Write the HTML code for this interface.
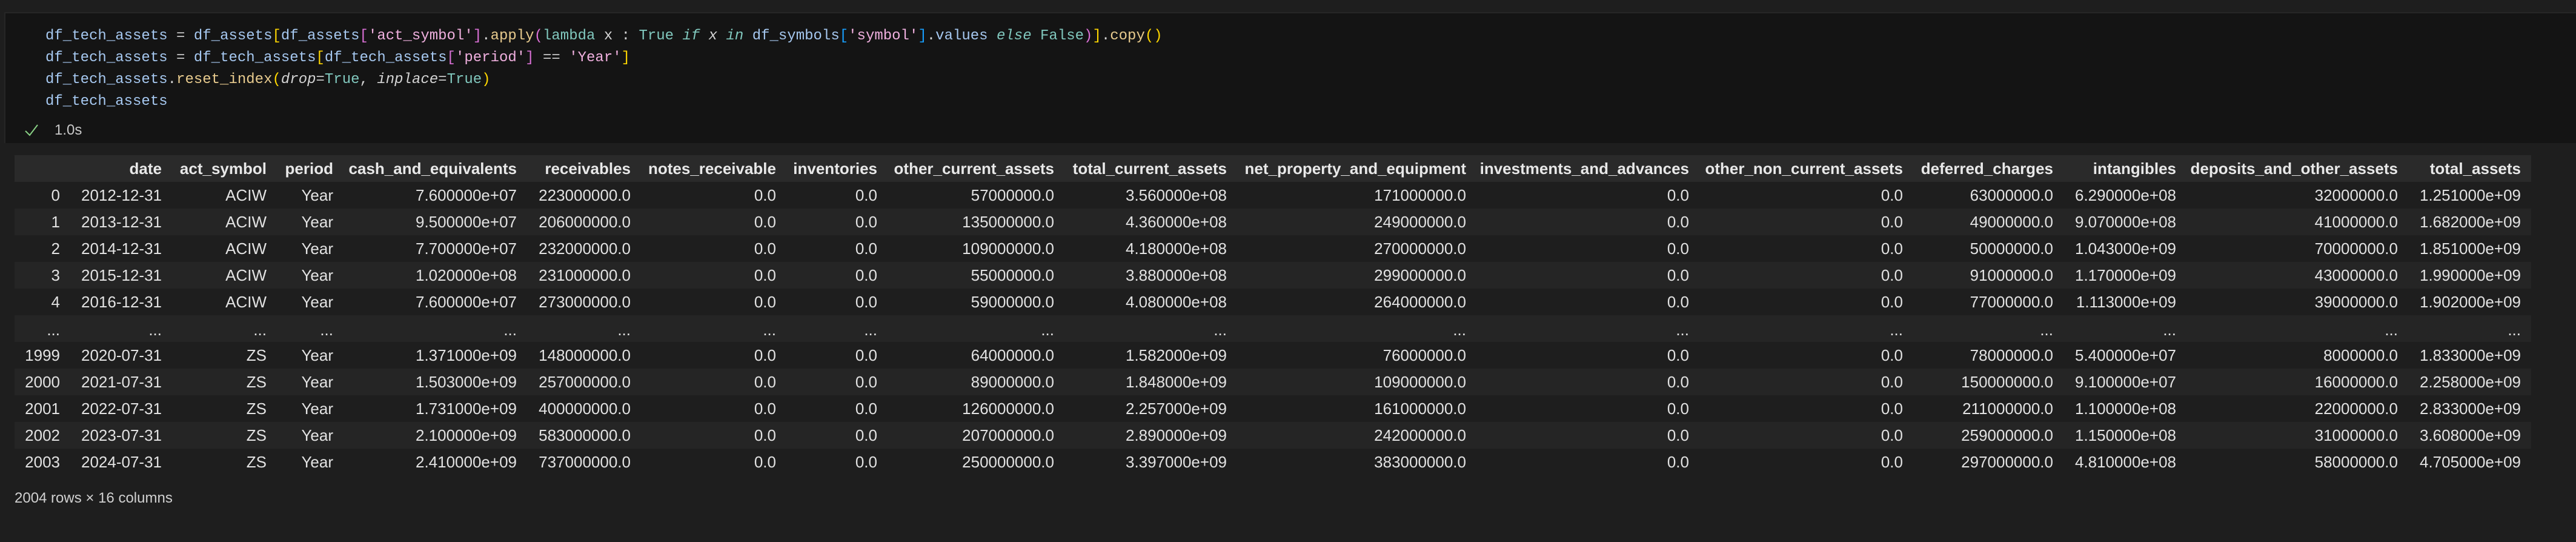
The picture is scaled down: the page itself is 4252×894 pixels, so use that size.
<!DOCTYPE html>
<html><head><meta charset="utf-8"><style>
html,body{margin:0;padding:0;width:4252px;height:894px;background:#1e1e1e;overflow:hidden}
.cell{position:absolute;left:7px;top:20px;width:4245px;height:216px;background:#141414;border-top:2px solid #262626;border-left:2px solid #262626;box-sizing:border-box}
.code{position:absolute;left:75px;top:42px;font-family:"Liberation Mono",monospace;font-size:24px;line-height:36px;color:#a6c8f0;white-space:pre}
.o{color:#c6c6c6}.s{color:#f0b0df}.m{color:#e8cb8e}.k{color:#81c8be}.i{font-style:italic}.w{color:#d4d4d4}
.y{color:#ffd700}.p{color:#da70d6}.b{color:#179fff}
.chk{position:absolute;left:40px;top:203px}
.time{position:absolute;left:90px;top:201px;font-family:"Liberation Sans",sans-serif;font-size:24px;color:#c8c8c8}
table{position:absolute;left:24px;top:256px;width:4154px;border-collapse:collapse;table-layout:fixed;font-family:"Liberation Sans",sans-serif;font-size:26px;color:#e2e2e2}
td,th{height:44px;padding:0;text-align:right;white-space:nowrap;overflow:visible}
th{font-weight:bold;background:#2a2a2a;color:#e8e8e8}
tr.l td{background:#252525}
tr.e td{vertical-align:bottom;padding-bottom:4px;height:40px}
td:last-child,th:last-child{padding-right:17px}
.foot{position:absolute;left:24px;top:808px;font-family:"Liberation Sans",sans-serif;font-size:24px;color:#d0d0d0}
</style></head><body>
<div class="cell"></div>
<div class="code">df_tech_assets <span class="o">=</span> df_assets<span class="y">[</span>df_assets<span class="p">[</span><span class="s">'act_symbol'</span><span class="p">]</span><span class="w">.</span><span class="m">apply</span><span class="p">(</span><span class="k">lambda</span> <span class="w">x :</span> <span class="k">True</span> <span class="k i">if</span> <span class="w i">x</span> <span class="k i">in</span> df_symbols<span class="b">[</span><span class="s">'symbol'</span><span class="b">]</span><span class="w">.</span>values <span class="k i">else</span> <span class="k">False</span><span class="p">)</span><span class="y">]</span><span class="w">.</span><span class="m">copy</span><span class="y">()</span>
df_tech_assets <span class="o">=</span> df_tech_assets<span class="y">[</span>df_tech_assets<span class="p">[</span><span class="s">'period'</span><span class="p">]</span> <span class="o">==</span> <span class="s">'Year'</span><span class="y">]</span>
df_tech_assets<span class="w">.</span><span class="m">reset_index</span><span class="y">(</span><span class="w i">drop</span><span class="o">=</span><span class="k">True</span><span class="w">,</span> <span class="w i">inplace</span><span class="o">=</span><span class="k">True</span><span class="y">)</span>
df_tech_assets</div>
<svg class="chk" width="24" height="24" viewBox="0 0 24 24"><path d="M2 13 L9 20 L22 3" fill="none" stroke="#89d185" stroke-width="2"/></svg>
<div class="time">1.0s</div>
<table>
<colgroup><col style="width:75px"><col style="width:168px"><col style="width:173px"><col style="width:110px"><col style="width:303px"><col style="width:188px"><col style="width:240px"><col style="width:167px"><col style="width:292px"><col style="width:285px"><col style="width:395px"><col style="width:368px"><col style="width:353px"><col style="width:248px"><col style="width:203px"><col style="width:366px"><col style="width:220px"></colgroup>
<tr><th></th><th>date</th><th>act_symbol</th><th>period</th><th>cash_and_equivalents</th><th>receivables</th><th>notes_receivable</th><th>inventories</th><th>other_current_assets</th><th>total_current_assets</th><th>net_property_and_equipment</th><th>investments_and_advances</th><th>other_non_current_assets</th><th>deferred_charges</th><th>intangibles</th><th>deposits_and_other_assets</th><th>total_assets</th></tr>
<tr><td>0</td><td>2012-12-31</td><td>ACIW</td><td>Year</td><td>7.600000e+07</td><td>223000000.0</td><td>0.0</td><td>0.0</td><td>57000000.0</td><td>3.560000e+08</td><td>171000000.0</td><td>0.0</td><td>0.0</td><td>63000000.0</td><td>6.290000e+08</td><td>32000000.0</td><td>1.251000e+09</td></tr>
<tr class="l"><td>1</td><td>2013-12-31</td><td>ACIW</td><td>Year</td><td>9.500000e+07</td><td>206000000.0</td><td>0.0</td><td>0.0</td><td>135000000.0</td><td>4.360000e+08</td><td>249000000.0</td><td>0.0</td><td>0.0</td><td>49000000.0</td><td>9.070000e+08</td><td>41000000.0</td><td>1.682000e+09</td></tr>
<tr><td>2</td><td>2014-12-31</td><td>ACIW</td><td>Year</td><td>7.700000e+07</td><td>232000000.0</td><td>0.0</td><td>0.0</td><td>109000000.0</td><td>4.180000e+08</td><td>270000000.0</td><td>0.0</td><td>0.0</td><td>50000000.0</td><td>1.043000e+09</td><td>70000000.0</td><td>1.851000e+09</td></tr>
<tr class="l"><td>3</td><td>2015-12-31</td><td>ACIW</td><td>Year</td><td>1.020000e+08</td><td>231000000.0</td><td>0.0</td><td>0.0</td><td>55000000.0</td><td>3.880000e+08</td><td>299000000.0</td><td>0.0</td><td>0.0</td><td>91000000.0</td><td>1.170000e+09</td><td>43000000.0</td><td>1.990000e+09</td></tr>
<tr><td>4</td><td>2016-12-31</td><td>ACIW</td><td>Year</td><td>7.600000e+07</td><td>273000000.0</td><td>0.0</td><td>0.0</td><td>59000000.0</td><td>4.080000e+08</td><td>264000000.0</td><td>0.0</td><td>0.0</td><td>77000000.0</td><td>1.113000e+09</td><td>39000000.0</td><td>1.902000e+09</td></tr>
<tr class="l e"><td>...</td><td>...</td><td>...</td><td>...</td><td>...</td><td>...</td><td>...</td><td>...</td><td>...</td><td>...</td><td>...</td><td>...</td><td>...</td><td>...</td><td>...</td><td>...</td><td>...</td></tr>
<tr><td>1999</td><td>2020-07-31</td><td>ZS</td><td>Year</td><td>1.371000e+09</td><td>148000000.0</td><td>0.0</td><td>0.0</td><td>64000000.0</td><td>1.582000e+09</td><td>76000000.0</td><td>0.0</td><td>0.0</td><td>78000000.0</td><td>5.400000e+07</td><td>8000000.0</td><td>1.833000e+09</td></tr>
<tr class="l"><td>2000</td><td>2021-07-31</td><td>ZS</td><td>Year</td><td>1.503000e+09</td><td>257000000.0</td><td>0.0</td><td>0.0</td><td>89000000.0</td><td>1.848000e+09</td><td>109000000.0</td><td>0.0</td><td>0.0</td><td>150000000.0</td><td>9.100000e+07</td><td>16000000.0</td><td>2.258000e+09</td></tr>
<tr><td>2001</td><td>2022-07-31</td><td>ZS</td><td>Year</td><td>1.731000e+09</td><td>400000000.0</td><td>0.0</td><td>0.0</td><td>126000000.0</td><td>2.257000e+09</td><td>161000000.0</td><td>0.0</td><td>0.0</td><td>211000000.0</td><td>1.100000e+08</td><td>22000000.0</td><td>2.833000e+09</td></tr>
<tr class="l"><td>2002</td><td>2023-07-31</td><td>ZS</td><td>Year</td><td>2.100000e+09</td><td>583000000.0</td><td>0.0</td><td>0.0</td><td>207000000.0</td><td>2.890000e+09</td><td>242000000.0</td><td>0.0</td><td>0.0</td><td>259000000.0</td><td>1.150000e+08</td><td>31000000.0</td><td>3.608000e+09</td></tr>
<tr><td>2003</td><td>2024-07-31</td><td>ZS</td><td>Year</td><td>2.410000e+09</td><td>737000000.0</td><td>0.0</td><td>0.0</td><td>250000000.0</td><td>3.397000e+09</td><td>383000000.0</td><td>0.0</td><td>0.0</td><td>297000000.0</td><td>4.810000e+08</td><td>58000000.0</td><td>4.705000e+09</td></tr>
</table>
<div class="foot">2004 rows × 16 columns</div>
</body></html>
